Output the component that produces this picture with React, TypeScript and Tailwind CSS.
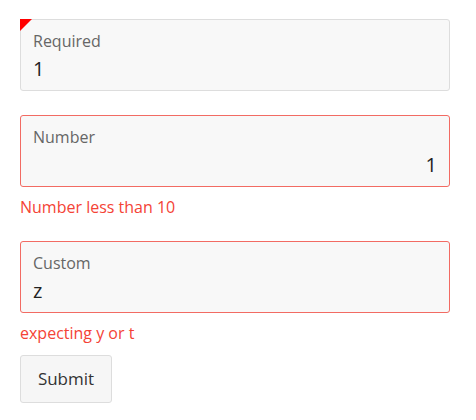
import React from 'react';

interface FieldProps {
    label: string;
    value: string;
    error?: string;
    align?: 'left' | 'right';
    required?: boolean;
}

function Field({ label, value, error, align = 'left', required }: FieldProps) {
    return (
        <div className="flex flex-col">
            <div
                className={`relative h-[72px] rounded-[3px] border bg-[#f8f8f8] px-3 pt-[9px] ${
                    error ? 'border-[#f26b63]' : 'border-[#dddddd]'
                }`}
            >
                {required && (
                    <div className="absolute -left-px -top-px h-0 w-0 border-r-[12px] border-t-[12px] border-r-transparent border-t-[#ff0000]" />
                )}
                <div className="text-[16px] leading-6 text-[#666666]">{label}</div>
                <div className={`text-[20px] leading-8 text-[#222222] ${align === 'right' ? 'text-right' : 'text-left'}`}>
                    {value}
                </div>
            </div>
            {error && <div className="mt-2 text-[16px] leading-6 text-[#f44336]">{error}</div>}
        </div>
    );
}

export default function App() {
    return (
        <div className="flex flex-col bg-white px-5 pt-[19px] font-['Open_Sans','Liberation_Sans',sans-serif]" style={{ width: 470 }}>
            <Field label="Required" value="1" required />
            <div className="mt-6">
                <Field label="Number" value="1" align="right" error="Number less than 10" />
            </div>
            <div className="mt-[22px]">
                <Field label="Custom" value="z" error="expecting y or t" />
            </div>
            <div className="mt-[10px]">
                <button className="h-12 w-[92px] rounded-[3px] border border-[#dddddd] bg-[#f6f6f6] text-[17px] text-[#333333]">
                    Submit
                </button>
            </div>
        </div>
    );
}
